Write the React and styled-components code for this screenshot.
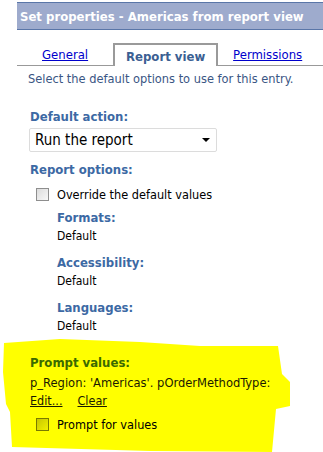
import React from "react";
import styled, { createGlobalStyle } from "styled-components";

const Global = createGlobalStyle`
  html, body { margin: 0; padding: 0; background: #fff; }
  body { font-family: "DejaVu Sans Condensed", "DejaVu Sans", sans-serif; font-size: 12px; color: #000; }
`;

const Page = styled.div`
  width: 323px;
  height: 452px;
  overflow: hidden;
  position: relative;
  padding-top: 2px;
  box-sizing: border-box;
`;

const TitleBar = styled.div`
  margin-left: 17px;
  height: 26px;
  background: #9eabcd;
  border-top: 1px solid #5a76a8;
  border-bottom: 1px solid #5a76a8;
  color: #fff;
  font-weight: bold;
  font-size: 13px;
  display: flex;
  align-items: center;
  padding-left: 3px;
  white-space: nowrap;
`;

const Tabs = styled.div`
  margin-left: 17px;
  margin-top: 12px;
  display: flex;
  align-items: flex-end;
  border-bottom: 1px solid #999;
  height: 23px;
  padding-left: 25px;
`;

const Tab = styled.a`
  height: 21px;
  display: flex;
  align-items: center;
  justify-content: center;
  box-sizing: border-box;
  font-size: 13px;
  white-space: nowrap;
  ${(p) =>
    p.$active
      ? `
    border: 2px solid #9a9a9a;
    border-bottom: none;
    height: 23px;
    width: 105px;
    margin-left: 25px;
    margin-right: 15px;
    margin-bottom: -1px;
    background: #fff;
    color: #3b5f93;
    font-weight: bold;
    padding-top: 1px;
  `
      : `
    color: #0000cc;
    text-decoration: underline;
  `}
`;

const Content = styled.div`
  position: relative;
  padding-left: 28px;
  padding-top: 5px;
`;

const Intro = styled.div`
  color: #3a5684;
  font-size: 12.7px;
  margin-bottom: 23px;
  white-space: nowrap;
`;

const Heading = styled.div`
  color: #3c69a4;
  font-weight: bold;
  font-size: 13px;
  margin-left: ${(p) => p.$indent ?? 2}px;
  margin-bottom: ${(p) => p.$mb ?? 4}px;
  line-height: 15px;
`;

const Select = styled.div`
  width: 188px;
  height: 24px;
  box-sizing: border-box;
  border: 1px solid #dcdcdc;
  border-radius: 2px;
  margin-left: 1px;
  display: flex;
  align-items: center;
  justify-content: space-between;
  padding: 0 6px 0 5px;
  font-size: 15px;
  margin-bottom: 10px;
`;

const Arrow = styled.span`
  width: 0;
  height: 0;
  border-left: 4px solid transparent;
  border-right: 4px solid transparent;
  border-top: 4px solid #000;
`;

const CheckRow = styled.label`
  display: flex;
  align-items: center;
  margin-left: 8px;
  gap: 8px;
  font-size: 12.6px;
  height: 16px;
  white-space: nowrap;
`;

const Box = styled.span`
  width: 11px;
  height: 11px;
  border: 1px solid;
  background: ${(p) => (p.$hl ? "linear-gradient(135deg, #c8c800, #f0f000)" : "linear-gradient(135deg, #dcdcdc, #f8f8f8)")};
  border-color: ${(p) => (p.$hl ? "#7a7a00" : "#8e8e8e")};
`;

const Sub = styled.div`
  margin-left: 29px;
  margin-top: ${(p) => p.$mt || 0}px;
`;

const Value = styled.div`
  font-size: 12px;
  line-height: 15px;
`;

const Highlight = styled.svg`
  position: absolute;
  left: 0;
  top: 0;
  z-index: 0;
`;

const Prompt = styled.div`
  position: relative;
  z-index: 1;
  margin-top: 21px;
`;

const PromptHeading = styled(Heading)`
  color: #3b6a00;
`;

const Text = styled.div`
  font-size: 12.8px;
  line-height: 15px;
  margin-left: 2px;
  color: #1a1a00;
  white-space: nowrap;
`;

const Links = styled.div`
  display: flex;
  gap: 15px;
  margin-left: 2px;
  margin-top: 3px;
  margin-bottom: 8px;
`;

const Link = styled.a`
  color: #1a1a00;
  text-decoration: underline;
  font-size: 12.5px;
`;

export default function App() {
  return (
    <>
      <Global />
      <Page>
        <Highlight width="323" height="452" viewBox="0 0 323 452">
          <polygon
            fill="#ffff00"
            points="4,343 60,339 140,342 200,346 278,346 282,374 290,382 290,406 276,409 272,452 150,451 12,447 10,412 6,404 3,372"
          />
        </Highlight>
        <TitleBar>Set properties - Americas from report view</TitleBar>
        <Tabs>
          <Tab>General</Tab>
          <Tab $active>Report view</Tab>
          <Tab>Permissions</Tab>
        </Tabs>
        <Content>
          <Intro>Select the default options to use for this entry.</Intro>
          <Heading>Default action:</Heading>
          <Select>
            <span>Run the report</span>
            <Arrow />
          </Select>
          <Heading $mb={9}>Report options:</Heading>
          <CheckRow>
            <Box />
            Override the default values
          </CheckRow>
          <Sub $mt={8}>
            <Heading $indent={0} $mb={4}>Formats:</Heading>
            <Value>Default</Value>
          </Sub>
          <Sub $mt={11}>
            <Heading $indent={0} $mb={4}>Accessibility:</Heading>
            <Value>Default</Value>
          </Sub>
          <Sub $mt={11}>
            <Heading $indent={0} $mb={4}>Languages:</Heading>
            <Value>Default</Value>
          </Sub>
          <Prompt>
            <PromptHeading $mb={5}>Prompt values:</PromptHeading>
            <Text>p_Region: 'Americas'. pOrderMethodType:</Text>
            <Links>
              <Link>Edit...</Link>
              <Link>Clear</Link>
            </Links>
            <CheckRow>
              <Box $hl />
              Prompt for values
            </CheckRow>
          </Prompt>
        </Content>
      </Page>
    </>
  );
}
